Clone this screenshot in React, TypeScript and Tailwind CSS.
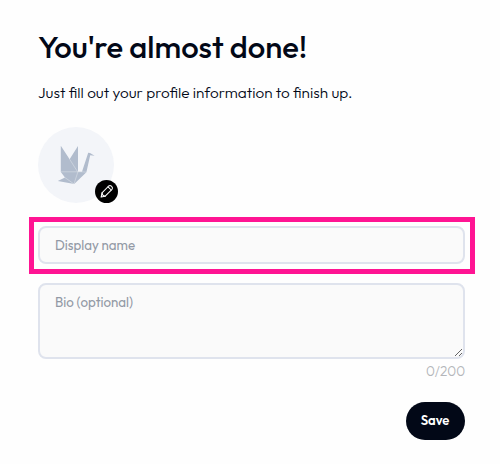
import { useState } from 'react';

const BIO_LIMIT = 200;

function CraneIcon() {
  return (
    <svg viewBox="0 0 76 76" className="h-full w-full">
      {/* Silhouette */}
      <path
        fill="#b1bccd"
        d="M22.8 18.8 31.6 32.2 40 19V44.8H44L50.2 25.8 52 26.1 56.6 28.8 52.2 28.3 48.4 45.2 36.2 57 19.8 54 27 50.6 22.8 45z"
      />
      {/* Fold lines */}
      <path
        fill="none"
        stroke="#e6eaf0"
        strokeWidth="0.45"
        d="M31.6 32.2 39.6 44.8M22.8 44.8H44M39.9 44.8 36 57M27 50.6 36 57M44 44.8 48.4 45.2"
      />
    </svg>
  );
}

function PencilIcon() {
  return (
    <svg viewBox="0 0 23 23" className="h-[23px] w-[23px]" fill="none" stroke="white" strokeWidth="1.05" strokeLinecap="round" strokeLinejoin="round">
      <path d="M6.1 17.1 7 12.9 13.7 6Q15 4.9 16.2 6L17 6.8Q18 8 17 9.3L10.2 16.2z" />
      <path d="M13 6.8 16.2 10M7 12.9 7.9 15.2 10.2 16.2" />
    </svg>
  );
}

export default function App() {
  const [name, setName] = useState('');
  const [bio, setBio] = useState('');

  return (
    <main className="h-[464px] w-[500px] overflow-hidden bg-[#fefefe] pr-[35px] pl-[38px] pt-[27px] font-['Outfit','Lato',sans-serif] text-[#020817]">
      <h1 className="h-[40px] whitespace-nowrap text-[31px] leading-[40px] font-medium">You're almost done!</h1>
      <p className="mt-4 h-5 whitespace-nowrap text-[15.35px] leading-5 font-[350]">
        Just fill out your profile information to finish up.
      </p>

      {/* Avatar */}
      <div className="relative mt-6 h-[76px] w-[76px] rounded-full bg-[#f3f5f9]">
        <CraneIcon />
        <button
          aria-label="Edit avatar"
          className="absolute top-[53px] left-[57px] flex h-[23px] w-[23px] items-center justify-center rounded-full bg-black"
        >
          <PencilIcon />
        </button>
      </div>

      {/* Profile form */}
      <form className="mt-[23px] flex flex-col" onSubmit={(e) => e.preventDefault()}>
        <div className="relative h-[38px]">
          <input
            value={name}
            onChange={(e) => setName(e.target.value)}
            placeholder="Display name"
            className="block h-[38px] w-full rounded-lg border-2 border-[#dfe3ed] bg-[#fafafa] px-[15px] text-[13.3px] outline-none placeholder:text-[#9299a5]"
          />
          <div className="pointer-events-none absolute -top-[9px] -right-[10px] -bottom-[10px] -left-[9px] border-5 border-[#ff1493]" />
        </div>
        <textarea
          value={bio}
          maxLength={BIO_LIMIT}
          onChange={(e) => setBio(e.target.value)}
          placeholder="Bio (optional)"
          className="mt-[19px] block h-[76px] w-full resize rounded-lg border-2 border-[#dfe3ed] bg-[#fafafa] px-[15px] py-[7px] text-[13.3px] leading-5 outline-none placeholder:text-[#9299a5]"
        />
        <span className="mt-[2px] h-5 self-end text-[13.5px] leading-[21px] font-light text-[#b4b6ba]">
          {bio.length}/{BIO_LIMIT}
        </span>
        <button className="mt-[21px] h-[38px] w-[59px] self-end rounded-full bg-[#020817] pr-px text-[13px] font-semibold text-white">
          Save
        </button>
      </form>
    </main>
  );
}
